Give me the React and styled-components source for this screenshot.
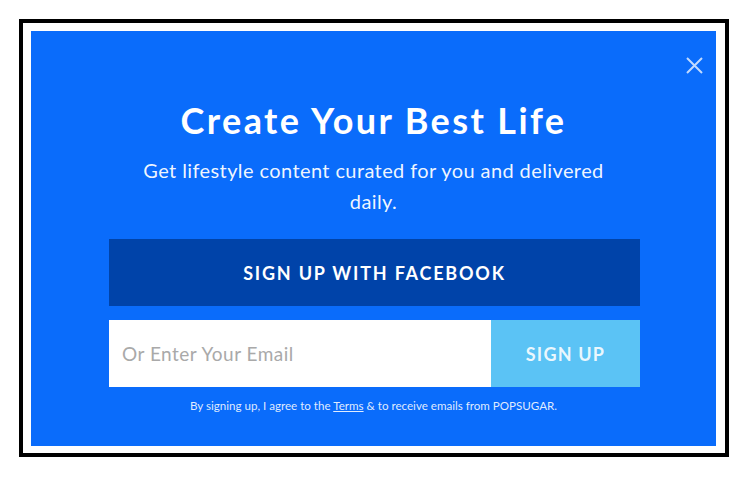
import React from "react";
import styled, { createGlobalStyle } from "styled-components";

const GlobalStyle = createGlobalStyle`
  html, body {
    margin: 0;
    padding: 0;
    background: #ffffff;
  }
  body {
    font-family: Lato, "Open Sans", Arial, sans-serif;
  }
`;

const Page = styled.div`
  padding: 19px 0 0 19px;
`;

const Frame = styled.div`
  box-sizing: border-box;
  width: 710px;
  height: 438px;
  border: 4px solid #000;
  padding: 8px 9px 7px 8px;
  background: #fff;
`;

const Modal = styled.section`
  position: relative;
  box-sizing: border-box;
  height: 100%;
  background: #0a6cfb;
  display: flex;
  flex-direction: column;
  align-items: center;
  padding-top: 68px;
  color: #fff;
`;

const Close = styled.button`
  position: absolute;
  top: 24px;
  right: 12px;
  width: 20px;
  height: 20px;
  padding: 0;
  border: 0;
  background: none;
  cursor: pointer;
  display: flex;
  align-items: center;
  justify-content: center;
`;

const Title = styled.h1`
  margin: 0;
  font-size: 36px;
  font-weight: 700;
  letter-spacing: 2.4px;
  line-height: 42px;
`;

const Subtitle = styled.p`
  margin: 14px 0 0;
  width: 480px;
  text-align: center;
  font-size: 20px;
  letter-spacing: 0.4px;
  line-height: 31px;
  color: rgba(255, 255, 255, 0.95);
`;

const Form = styled.form`
  width: 531px;
  margin: 22px 0 0 2px;
  display: flex;
  flex-direction: column;
  gap: 14px;
`;

const FacebookButton = styled.button`
  height: 67px;
  border: 0;
  background: #0043a9;
  color: #fff;
  font-family: inherit;
  font-size: 18px;
  font-weight: 700;
  letter-spacing: 1.8px;
  cursor: pointer;
`;

const EmailRow = styled.div`
  display: flex;
  height: 67px;
`;

const EmailInput = styled.input`
  flex: 1;
  min-width: 0;
  border: 0;
  outline: none;
  padding: 0 13px;
  font-family: inherit;
  font-size: 19px;
  letter-spacing: 0.5px;
  color: #333;
  background: #fff;
  &::placeholder {
    color: #a9a9a9;
  }
`;

const SubmitButton = styled.button`
  width: 149px;
  border: 0;
  background: #5bc3f5;
  color: rgba(255, 255, 255, 0.88);
  font-family: inherit;
  font-size: 18px;
  font-weight: 700;
  letter-spacing: 1.2px;
  cursor: pointer;
`;

const FinePrint = styled.p`
  margin: 12px 0 0;
  font-size: 11.6px;
  color: rgba(255, 255, 255, 0.88);
  a {
    color: inherit;
    text-decoration: underline;
  }
`;

const App = () => {
  return (
    <>
      <GlobalStyle />
      <Page>
        <Frame>
          <Modal>
            <Close aria-label="Close">
              <svg width="17" height="17" viewBox="0 0 17 17">
                <path
                  d="M1 1 L16 16 M16 1 L1 16"
                  stroke="rgba(255,255,255,0.75)"
                  strokeWidth="2"
                  fill="none"
                />
              </svg>
            </Close>
            <Title>Create Your Best Life</Title>
            <Subtitle>
              Get lifestyle content curated for you and delivered daily.
            </Subtitle>
            <Form onSubmit={(e) => e.preventDefault()}>
              <FacebookButton type="button">SIGN UP WITH FACEBOOK</FacebookButton>
              <EmailRow>
                <EmailInput type="email" placeholder="Or Enter Your Email" />
                <SubmitButton type="submit">SIGN UP</SubmitButton>
              </EmailRow>
            </Form>
            <FinePrint>
              By signing up, I agree to the <a href="#">Terms</a> &amp; to receive
              emails from POPSUGAR.
            </FinePrint>
          </Modal>
        </Frame>
      </Page>
    </>
  );
};

export default App;
